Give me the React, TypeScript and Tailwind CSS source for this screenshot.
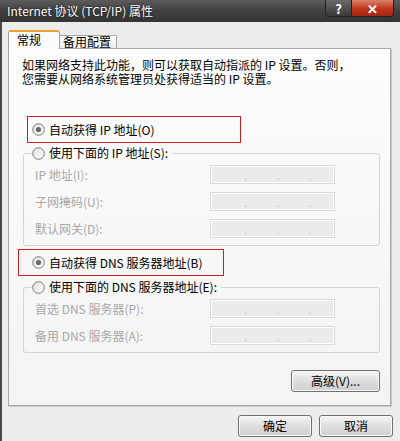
import React from "react";

const FONT = { fontFamily: '"Noto Sans CJK SC", "Noto Sans", sans-serif' };

function Radio({ checked }: { checked?: boolean }) {
  return (
    <svg width="13" height="13" viewBox="0 0 13 13" className="shrink-0">
      <defs>
        <linearGradient id="rg" x1="0" y1="0" x2="1" y2="1">
          <stop offset="0" stopColor="#dcdcdc" />
          <stop offset="1" stopColor="#ffffff" />
        </linearGradient>
      </defs>
      <circle cx="6.5" cy="6.5" r="5.8" fill="url(#rg)" stroke="#7c7c7c" strokeWidth="1" />
      {checked && <circle cx="6.5" cy="6.5" r="2.6" fill="#6a6a6a" />}
    </svg>
  );
}

function IpField() {
  return (
    <div className="w-[125px] h-[19px] border border-[#dadada] shadow-[inset_0_0_0_1px_#ffffff] bg-[#ebebeb] flex items-end pb-[2px] text-[10px] leading-[10px] text-[#b0b0b0]">
      <span className="ml-[33px]">.</span>
      <span className="ml-[30px]">.</span>
      <span className="ml-[29px]">.</span>
    </div>
  );
}

function FieldRow({ label }: { label: string }) {
  return (
    <div className="flex items-center h-[19px]">
      <span className="w-[175px] text-[#a8a8a8] text-[12px] leading-[14px]">{label}</span>
      <IpField />
    </div>
  );
}

function Group({ title, rows }: { title: string; rows: string[] }) {
  return (
    <fieldset className="ml-[14px] w-[357px] border border-[#d4d4d4] rounded-[3px] pb-[7px]">
      <legend className="ml-[8px] pr-[4px] h-[14px] flex items-center gap-[4px] text-[12px] leading-[14px] text-black">
        <Radio />
        <span>{title}</span>
      </legend>
      <div className="flex flex-col gap-[8px] pt-[5px] pl-[11px]">
        {rows.map((r) => (
          <FieldRow key={r} label={r} />
        ))}
      </div>
    </fieldset>
  );
}

function Button({ label, w }: { label: string; w: string }) {
  return (
    <button
      className={`${w} h-[22px] rounded-[3px] border border-[#707070] bg-gradient-to-b from-[#f6f6f6] via-[#dedede] to-[#cfcfcf] shadow-[inset_0_0_0_1px_#fafafa] text-[12px] leading-[14px] text-black`}
    >
      {label}
    </button>
  );
}

export default function App() {
  return (
    <div className="w-[400px] h-[441px] overflow-hidden bg-[#ececec] flex flex-col" style={FONT}>
      {/* Title bar */}
      <div className="h-[22px] flex justify-between bg-gradient-to-b from-[#5c5c5c] via-[#404040] to-[#343434]">
        <span className="pl-[7px] pt-[4px] text-[12px] leading-[14px] text-white [text-shadow:0_0_2px_#000]">
          Internet 协议 (TCP/IP) 属性
        </span>
        <div className="mr-[6px] flex h-[17px] rounded-b-[4px] border border-t-0 border-[#222] overflow-hidden">
          <div className="w-[26px] flex items-center justify-center bg-gradient-to-b from-[#6a6a6a] to-[#3a3a3a] border-r border-[#222] text-white text-[13px] font-bold leading-none">
            ?
          </div>
          <div className="w-[41px] flex items-center justify-center bg-gradient-to-b from-[#d8826a] via-[#c2381c] to-[#a32610] text-white text-[13px] font-bold leading-none">
            ✕
          </div>
        </div>
      </div>

      {/* Body */}
      <div className="flex-1 flex flex-col border-l-2 border-[#4a4a4a] pl-[6px] pt-[8px]">
        {/* Tabs */}
        <div className="flex items-end h-[18px]">
          <div className="relative z-10 w-[52px] h-[19px] -mb-[1px] rounded-t-[3px] border border-b-0 border-[#a0a0a0] border-t-[2px] border-t-[#f0a030] bg-[#fcfcfc] pl-[8px] text-[12px] leading-[16px] text-black">
            常规
          </div>
          <div className="w-[57px] h-[13px] rounded-tr-[2px] border border-l-0 border-b-0 border-[#a8a8a8] bg-gradient-to-b from-white to-[#ececec] pl-[3px] text-[12px] leading-[12px] text-black">
            备用配置
          </div>
        </div>

        {/* Panel */}
        <div className="w-[383px] h-[358px] border border-[#a8a8a8] shadow-[1px_1px_0_#c8c8c8] bg-gradient-to-b from-[#fdfdfd] to-[#f3f3f3] flex flex-col">
          <p className="pl-[13px] pt-[9px] text-[12px] leading-[14px] text-black">
            如果网络支持此功能，则可以获取自动指派的 IP 设置。否则，
            <br />
            您需要从网络系统管理员处获得适当的 IP 设置。
          </p>

          <div className="mt-[30px] ml-[18px] w-[214px] h-[27px] border border-[#cc1f1f] flex items-center gap-[4px] pl-[4px] text-[12px] leading-[14px]">
            <Radio checked />
            <span>自动获得 IP 地址(O)</span>
          </div>

          <div className="mt-[3px]">
            <Group title="使用下面的 IP 地址(S):" rows={["IP 地址(I):", "子网掩码(U):", "默认网关(D):"]} />
          </div>

          <div className="mt-[3px] ml-[9px] w-[206px] h-[27px] border border-[#cc1f1f] flex items-center gap-[4px] pl-[13px] text-[12px] leading-[14px]">
            <Radio checked />
            <span>自动获得 DNS 服务器地址(B)</span>
          </div>

          <div className="mt-[4px]">
            <Group title="使用下面的 DNS 服务器地址(E):" rows={["首选 DNS 服务器(P):", "备用 DNS 服务器(A):"]} />
          </div>

          <div className="mt-[17px] flex justify-end pr-[10px]">
            <Button label="高级(V)..." w="w-[89px]" />
          </div>
        </div>

        {/* Dialog buttons */}
        <div className="mt-[9px] flex justify-end gap-[7px] pr-[7px]">
          <Button label="确定" w="w-[74px]" />
          <Button label="取消" w="w-[74px]" />
        </div>
      </div>
    </div>
  );
}
